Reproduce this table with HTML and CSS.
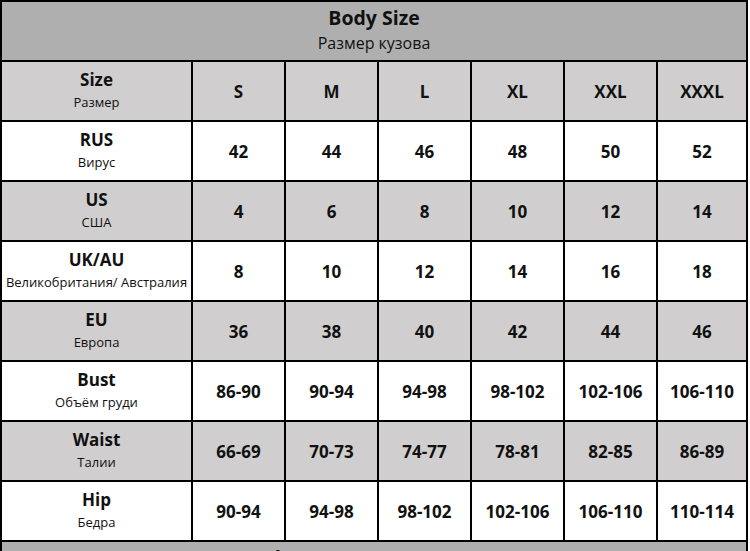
FILE: index.html
```html
<!DOCTYPE html>
<html lang="ru">
<head>
<meta charset="utf-8">
<title>Body Size</title>
<link rel="stylesheet" href="styles.css">
</head>
<body>
<div class="chart">
  <div class="cell title dark">
    <div class="title-main">Body Size</div>
    <div class="title-sub">Размер кузова</div>
  </div>

  <div class="cell label grey"><div class="lab">Size</div><div class="sub">Размер</div></div>
  <div class="cell val grey">S</div><div class="cell val grey">M</div><div class="cell val grey">L</div><div class="cell val grey">XL</div><div class="cell val grey">XXL</div><div class="cell val grey">XXXL</div>

  <div class="cell label"><div class="lab">RUS</div><div class="sub">Вирус</div></div>
  <div class="cell val">42</div><div class="cell val">44</div><div class="cell val">46</div><div class="cell val">48</div><div class="cell val">50</div><div class="cell val">52</div>

  <div class="cell label grey"><div class="lab">US</div><div class="sub">США</div></div>
  <div class="cell val grey">4</div><div class="cell val grey">6</div><div class="cell val grey">8</div><div class="cell val grey">10</div><div class="cell val grey">12</div><div class="cell val grey">14</div>

  <div class="cell label"><div class="lab">UK/AU</div><div class="sub">Великобритания/ Австралия</div></div>
  <div class="cell val">8</div><div class="cell val">10</div><div class="cell val">12</div><div class="cell val">14</div><div class="cell val">16</div><div class="cell val">18</div>

  <div class="cell label grey"><div class="lab">EU</div><div class="sub">Европа</div></div>
  <div class="cell val grey">36</div><div class="cell val grey">38</div><div class="cell val grey">40</div><div class="cell val grey">42</div><div class="cell val grey">44</div><div class="cell val grey">46</div>

  <div class="cell label"><div class="lab">Bust</div><div class="sub">Объём груди</div></div>
  <div class="cell val">86-90</div><div class="cell val">90-94</div><div class="cell val">94-98</div><div class="cell val">98-102</div><div class="cell val">102-106</div><div class="cell val">106-110</div>

  <div class="cell label grey"><div class="lab">Waist</div><div class="sub">Талии</div></div>
  <div class="cell val grey">66-69</div><div class="cell val grey">70-73</div><div class="cell val grey">74-77</div><div class="cell val grey">78-81</div><div class="cell val grey">82-85</div><div class="cell val grey">86-89</div>

  <div class="cell label"><div class="lab">Hip</div><div class="sub">Бедра</div></div>
  <div class="cell val">90-94</div><div class="cell val">94-98</div><div class="cell val">98-102</div><div class="cell val">102-106</div><div class="cell val">106-110</div><div class="cell val">110-114</div>

  <div class="cell title dark">
    <div class="title-main">Product Measurements (CM)</div>
    <div class="title-sub">Размеры изделия (см)</div>
  </div>
</div>
</body>
</html>
```

FILE: styles.css
```css
html, body {
  margin: 0;
  padding: 0;
  background: #ffffff;
  overflow: hidden;
}

body {
  font-family: "Open Sans", "Noto Sans", sans-serif;
  color: #111111;
}

.chart {
  display: grid;
  grid-template-columns: 189px repeat(5, 91px) 88px;
  grid-auto-rows: 58px;
  gap: 2px;
  padding: 2px;
  background: #000000;
  width: max-content;
}

.cell {
  background: #ffffff;
  display: flex;
  flex-direction: column;
  align-items: center;
  justify-content: center;
  text-align: center;
}

.grey {
  background: #d0cece;
}

.dark {
  background: #afafaf;
}

.title {
  grid-column: 1 / -1;
}

.title-main {
  font-weight: 700;
  font-size: 19.5px;
  line-height: 24px;
  margin-top: -3px;
}

.title-sub {
  font-size: 16px;
  line-height: 22px;
  margin-top: 2px;
}

.label .lab {
  font-weight: 700;
  font-size: 17px;
  line-height: 22px;
  margin-top: -3px;
}

.label .sub {
  font-size: 13px;
  line-height: 18px;
  margin-top: 2px;
  white-space: nowrap;
}

.val {
  font-weight: 700;
  font-size: 17px;
}
```
